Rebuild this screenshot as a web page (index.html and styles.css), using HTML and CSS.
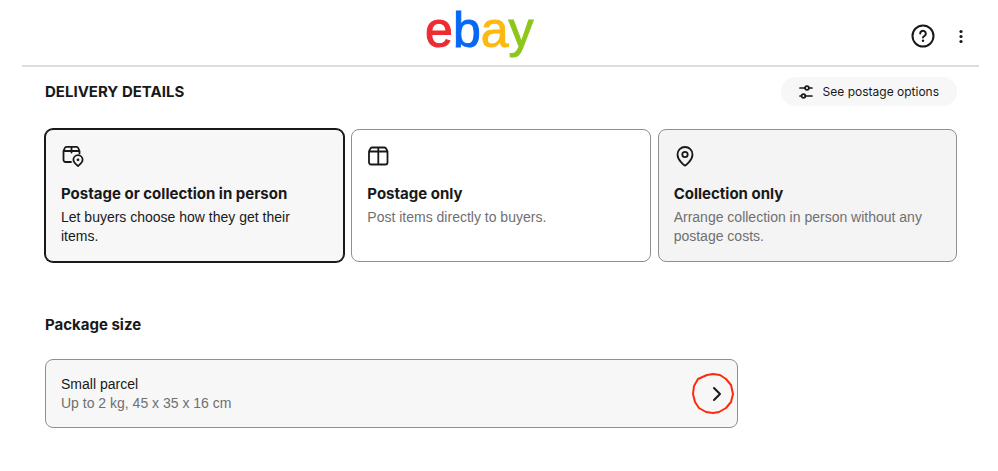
FILE: index.html
```
<!DOCTYPE html>
<html lang="en-GB">
<head>
    <meta charset="UTF-8">
    <meta name="viewport" content="width=device-width, initial-scale=1.0">
    <title>Delivery details | eBay</title>
    <link rel="stylesheet" href="styles.css">
</head>
<body>
    <header class="header">
        <a href="#" class="logo" aria-label="ebay"><span class="logo-e">e</span><span class="logo-b">b</span><span class="logo-a">a</span><span class="logo-y">y</span></a>
        <div class="header-actions">
            <button type="button" class="icon-button" aria-label="Help">
                <svg width="24" height="24" viewBox="0 0 24 24" fill="none" stroke="currentColor" stroke-width="2" stroke-linecap="round">
                    <circle cx="12" cy="12" r="10.5"/>
                    <path d="M9.200 9.500a2.800 2.800 0 1 1 4.400 2.300c-1 .6-1.600 1-1.600 1.700"/>
                    <circle cx="12" cy="16.700" r="1.200" fill="currentColor" stroke="none"/>
                </svg>
            </button>
            <button type="button" class="icon-button" aria-label="More options">
                <svg width="24" height="24" viewBox="0 0 24 24" fill="currentColor">
                    <circle cx="12" cy="7.500" r="1.600"/>
                    <circle cx="12" cy="12.500" r="1.600"/>
                    <circle cx="12" cy="17.500" r="1.600"/>
                </svg>
            </button>
        </div>
    </header>

    <main class="content">
        <section>
            <div class="section-header">
                <h2>DELIVERY DETAILS</h2>
                <button type="button" class="pill-button">
                    <svg width="14" height="14" viewBox="0 0 14 14" fill="none" stroke="currentColor" stroke-width="1.700" stroke-linecap="round">
                        <path d="M1 3h5M10 3h3M1 11h1M6 11h7"/>
                        <circle cx="8" cy="3" r="1.900"/>
                        <circle cx="4.500" cy="11" r="1.900"/>
                    </svg>
                    See postage options
                </button>
            </div>

            <div class="options">
                <label class="option selected">
                    <input type="radio" name="delivery" value="both" checked>
                    <svg class="option-icon" width="24" height="24" viewBox="0 0 24 24" fill="none" stroke="currentColor" stroke-width="1.800" stroke-linecap="round" stroke-linejoin="round">
                        <path d="M10 17H4.500a2 2 0 0 1-2-2V6l1.300-3A2 2 0 0 1 5.500 1.800h10A2 2 0 0 1 17.200 3l1.300 3v2.500M2.500 6h16M10.500 2v5.500"/>
                        <path d="M17 21c-2.300-1.700-4.600-3.500-4.600-6.200a4.600 4.600 0 0 1 9.200 0c0 2.700-2.300 4.500-4.600 6.200z"/>
                        <circle cx="17" cy="14.800" r="1.400" fill="currentColor" stroke="none"/>
                    </svg>
                    <span class="option-title">Postage or collection in person</span>
                    <span class="option-text">Let buyers choose how they get their items.</span>
                </label>

                <label class="option">
                    <input type="radio" name="delivery" value="postage">
                    <svg class="option-icon" width="24" height="24" viewBox="0 0 24 24" fill="none" stroke="currentColor" stroke-width="1.800" stroke-linecap="round" stroke-linejoin="round">
                        <path d="M2 6.500 3.300 3.700A2 2 0 0 1 5 2.500h12.500a2 2 0 0 1 1.700 1.200l1.300 2.800v11a2 2 0 0 1-2 2H4a2 2 0 0 1-2-2zM2 6.500h18.500M11.300 2.500v17"/>
                    </svg>
                    <span class="option-title">Postage only</span>
                    <span class="option-text">Post items directly to buyers.</span>
                </label>

                <label class="option muted">
                    <input type="radio" name="delivery" value="collection">
                    <svg class="option-icon" width="24" height="24" viewBox="0 0 24 24" fill="none" stroke="currentColor" stroke-width="1.800" stroke-linecap="round" stroke-linejoin="round">
                        <path d="M11 20.500c-.6 0-7.500-5.200-7.500-11a7.500 7.500 0 0 1 15 0c0 5.800-6.900 11-7.500 11z"/>
                        <circle cx="11" cy="9.500" r="2.700"/>
                    </svg>
                    <span class="option-title">Collection only</span>
                    <span class="option-text">Arrange collection in person without any postage costs.</span>
                </label>
            </div>
        </section>

        <section class="package">
            <h2>Package size</h2>
            <button type="button" class="package-button">
                <span class="package-info">
                    <span class="package-name">Small parcel</span>
                    <span class="package-detail">Up to 2 kg, 45 x 35 x 16 cm</span>
                </span>
                <svg class="chevron" width="42" height="42" viewBox="0 0 42 42" fill="none" stroke-linecap="round" stroke-linejoin="round">
                    <path class="ring" d="M15 2 21 1l7 1 6 4 5 6 2 9-2 8-5 6-7 4-6 1-7-1-7-4-4-6-2-8 1-8 4-7z"/>
                    <path class="arrow" d="m22 15 6 6-6 6"/>
                </svg>
            </button>
        </section>
    </main>
</body>
</html>
```
FILE: styles.css
```
:root {
    --text-color: #191919;
    --muted-color: #707070;
    --border-color: #8f8f8f;
    --light-gray: #f7f7f7;
    --line-color: #dddddd;
    --ring-color: #ff2a0e;
    --heading-font: Inter, "Liberation Sans", sans-serif;
}

* {
    margin: 0;
    padding: 0;
    box-sizing: border-box;
}

body {
    background-color: #ffffff;
    color: var(--text-color);
    font-family: "Liberation Sans", Arial, sans-serif;
    font-size: 14px;
    line-height: 19px;
}

button {
    border: none;
    background: none;
    color: inherit;
    font: inherit;
    cursor: pointer;
}

svg {
    display: block;
    flex-shrink: 0;
}

h2,
.option-title {
    font-family: var(--heading-font);
    font-size: 15px;
    font-weight: 700;
    line-height: 20px;
}

.header {
    display: grid;
    grid-template-columns: 19fr auto 21fr;
    align-items: center;
    margin: 0 19px 0 22px;
    height: 67px;
    border-bottom: 2px solid var(--line-color);
}

.logo {
    grid-column: 2;
    padding-bottom: 6px;
    font-size: 50px;
    line-height: 60px;
    text-decoration: none;
    -webkit-text-stroke: 1px;
}

.logo-e {
    color: #ee2b32;
}

.logo-b {
    color: #0668f5;
}

.logo-a {
    color: #fdb913;
}

.logo-y {
    color: #8fc61d;
}

.header-actions {
    display: flex;
    justify-content: flex-end;
    gap: 14px;
    padding: 5px 6px 0 0;
}

.content {
    padding: 10px 41px 40px 45px;
}

.section-header {
    display: flex;
    justify-content: space-between;
    align-items: center;
}

.pill-button {
    display: flex;
    align-items: center;
    gap: 10px;
    padding: 5px 18px;
    border-radius: 15px;
    background-color: var(--light-gray);
    font-family: var(--heading-font);
    font-size: 12px;
}

.options {
    display: grid;
    grid-template-columns: repeat(3, 1fr);
    gap: 7px;
    margin-top: 23px;
}

.option {
    position: relative;
    display: flex;
    flex-direction: column;
    min-height: 133px;
    padding: 15px;
    border: 1px solid var(--border-color);
    border-radius: 8px;
    cursor: pointer;
}

.option input {
    position: absolute;
    opacity: 0;
}

.option.selected {
    border-color: var(--text-color);
    background-color: var(--light-gray);
    box-shadow: 0 0 0 1px var(--text-color);
}

.option.muted {
    background-color: #f4f4f4;
}

.option-title {
    margin: 15px 0 4px;
}

.option-text {
    color: var(--muted-color);
}

.selected .option-text {
    color: var(--text-color);
}

.package {
    margin-top: 53px;
}

.package-button {
    display: flex;
    justify-content: space-between;
    align-items: center;
    width: 76%;
    margin-top: 24px;
    padding: 13px 3px 12px 15px;
    border: 1px solid var(--border-color);
    border-radius: 8px;
    background-color: var(--light-gray);
    text-align: left;
}

.package-name,
.package-detail {
    display: block;
}

.package-detail {
    color: var(--muted-color);
}

.ring {
    stroke: var(--ring-color);
    stroke-width: 2;
}

.arrow {
    stroke: var(--text-color);
    stroke-width: 2;
}
```
